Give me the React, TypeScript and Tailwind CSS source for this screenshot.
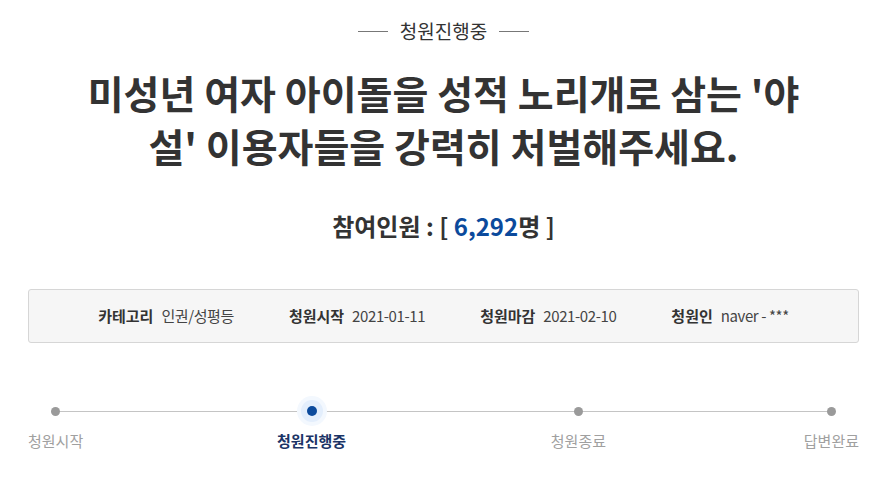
const steps = [
  { label: "청원시작", active: false },
  { label: "청원진행중", active: true },
  { label: "청원종료", active: false },
  { label: "답변완료", active: false },
];

// gaps between step labels are not even in the original page
const spacers = ["flex-[195_1_0%]", "flex-[206_1_0%]", "flex-[199_1_0%]"];

const info = [
  { label: "카테고리", value: "인권/성평등" },
  { label: "청원시작", value: "2021-01-11" },
  { label: "청원마감", value: "2021-02-10" },
  { label: "청원인", value: "naver - ***" },
];

export default function App() {
  return (
    <div
      className="w-[887px] h-[481px] bg-white px-[28px] text-[#333]"
      style={{ fontFamily: '"Noto Sans CJK KR", "Noto Sans", sans-serif' }}
    >
      <div className="pt-[18px] flex items-center justify-center gap-[12px]">
        <span className="w-[30px] h-px bg-[#777]" />
        <span className="text-[19px] leading-[26px] text-[#333]">청원진행중</span>
        <span className="w-[30px] h-px bg-[#777]" />
      </div>

      <h1 className="mt-[22px] text-center text-[39px] leading-[53px] font-bold text-[#333]">
        미성년 여자 아이돌을 성적 노리개로 삼는 '야
        <br />
        설' 이용자들을 강력히 처벌해주세요.
      </h1>

      <div className="mt-[38px] text-center text-[24px] leading-[32px] font-bold text-[#333]">
        참여인원 : [ <span className="text-[#0b4a9c]">6,292</span>명 ]
      </div>

      <div className="mt-[47px] h-[54px] rounded-[3px] border border-[#d6d6d6] bg-[#f6f6f6] flex items-center justify-center gap-[55px]">
        {info.map((it) => (
          <div key={it.label} className="flex items-center gap-[8px]">
            <span className="text-[15px] font-bold text-[#333]">{it.label}</span>
            <span className="text-[15px] text-[#444] tracking-[-0.4px]">{it.value}</span>
          </div>
        ))}
      </div>

      <div className="relative mt-[53px] flex">
        <div className="absolute left-[27px] right-[27px] top-[15px] h-px bg-[#c4c4c4]" />
        {steps.map((s, i) => (
          <div key={s.label} className="contents">
            <div className="relative flex flex-col items-center">
              <div className="h-[30px] flex items-center justify-center">
                {s.active ? (
                  <div className="w-[30px] h-[30px] rounded-full bg-[#f3f8fe] flex items-center justify-center">
                    <div className="w-[22px] h-[22px] rounded-full bg-[#e3eefc] flex items-center justify-center">
                      <div className="w-[10px] h-[10px] rounded-full bg-[#0b4a9c]" />
                    </div>
                  </div>
                ) : (
                  <div className="w-[9px] h-[9px] rounded-full bg-[#9a9a9a]" />
                )}
              </div>
              <div
                className={
                  s.active
                    ? "mt-[5px] text-[15px] leading-[20px] font-bold text-[#1b3466]"
                    : "mt-[5px] text-[15px] leading-[20px] text-[#a0a0a0]"
                }
              >
                {s.label}
              </div>
            </div>
            {i < spacers.length && <div className={spacers[i]} />}
          </div>
        ))}
      </div>
    </div>
  );
}
